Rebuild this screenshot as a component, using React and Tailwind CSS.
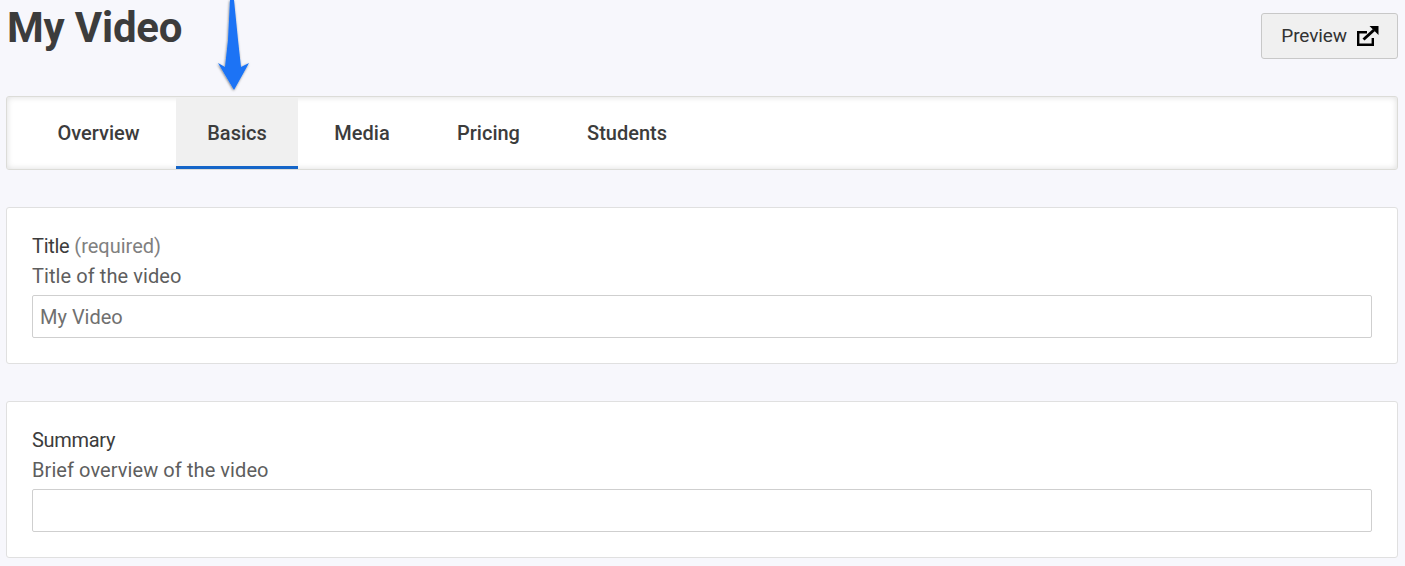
import React from "react";

function ExternalIcon() {
  return (
    <svg width="22" height="20" viewBox="0 0 22 20" className="block">
      <path d="M10 6.2H1.2V18.8H15.8V12" fill="none" stroke="#000" strokeWidth="2.4" />
      <path d="M6.5 13.5L17 4" fill="none" stroke="#000" strokeWidth="3" />
      <path d="M12.5 0H21.5V9Z" fill="#000" />
    </svg>
  );
}

function Arrow() {
  return (
    <svg width="44" height="100" viewBox="0 0 44 100" className="absolute left-[212px] top-0 pointer-events-none">
      <defs>
        <filter id="s" x="-30%" y="-10%" width="160%" height="120%">
          <feDropShadow dx="-0.5" dy="0.8" stdDeviation="0.9" floodColor="#000" floodOpacity="0.5" />
        </filter>
      </defs>
      <path d="M18 0H22L26 40L29 67L37 63L22 90L6 63L13 67L16 40Z" fill="#1a73f5" filter="url(#s)" />
    </svg>
  );
}

function Field({ label, required, help, value }) {
  return (
    <section className="h-[157px] rounded-[3px] border border-[#e0e0e0] bg-white px-[25px] pt-[25px]">
      <div className="text-[20px] leading-[26px] tracking-[-0.3px] text-[#3c3c3c]">
        {label}
        {required && <span className="ml-[5px] tracking-normal text-[#808080]">(required)</span>}
      </div>
      <div className="mt-[4px] text-[20px] leading-[26px] tracking-[0.08px] text-[#5e5e5e]">{help}</div>
      <input
        readOnly
        placeholder={value}
        className="mt-[6px] block h-[43px] w-full rounded-[2px] border border-[#cfcfcf] bg-white px-[7px] text-[20px] text-[#707070] placeholder:text-[#707070] outline-none"
      />
    </section>
  );
}

export default function App() {
  const tabs = [
    { name: "Overview", width: "w-[147px]" },
    { name: "Basics", width: "w-[122px]" },
    { name: "Media", width: "w-[120px]" },
    { name: "Pricing", width: "w-[125px]" },
    { name: "Students", width: "w-[144px]" },
  ];
  return (
    <div className="relative h-[566px] overflow-hidden bg-[#f7f7fc] pl-[6px] pr-[7px] font-['Roboto',sans-serif]">
      <Arrow />
      <header className="flex h-[96px] items-start justify-between">
        <h1 className="mt-[3px] pl-[1px] text-[42px] font-bold leading-[50px] tracking-[-0.2px] text-[#3c3c3c]">My Video</h1>
        <button className="mt-[13px] flex h-[46px] w-[137px] items-center justify-end gap-[10px] rounded-[3px] border border-[#c8c8c8] bg-[#f0f0f0] pr-[18px] text-[19px] tracking-[-0.1px] text-[#333]">
          Preview
          <ExternalIcon />
        </button>
      </header>
      <nav className="flex h-[74px] gap-[4px] rounded-[3px] border border-[#dcdcd8] bg-white pl-[18px] shadow-[inset_0_0_6px_rgba(0,0,0,0.14)]">
        {tabs.map((t) => (
          <div
            key={t.name}
            className={
              "flex items-center justify-center border-b-[3px] pt-[3px] text-[20px] font-medium text-[#3c3c3c] " +
              t.width +
              " " +
              (t.name === "Basics" ? "border-[#1565c8] bg-[#f0f0f0]" : "border-transparent")
            }
          >
            {t.name}
          </div>
        ))}
      </nav>
      <main className="mt-[37px] flex flex-col gap-[37px]">
        <Field label="Title" required help="Title of the video" value="My Video" />
        <Field label="Summary" help="Brief overview of the video" value="" />
      </main>
    </div>
  );
}
